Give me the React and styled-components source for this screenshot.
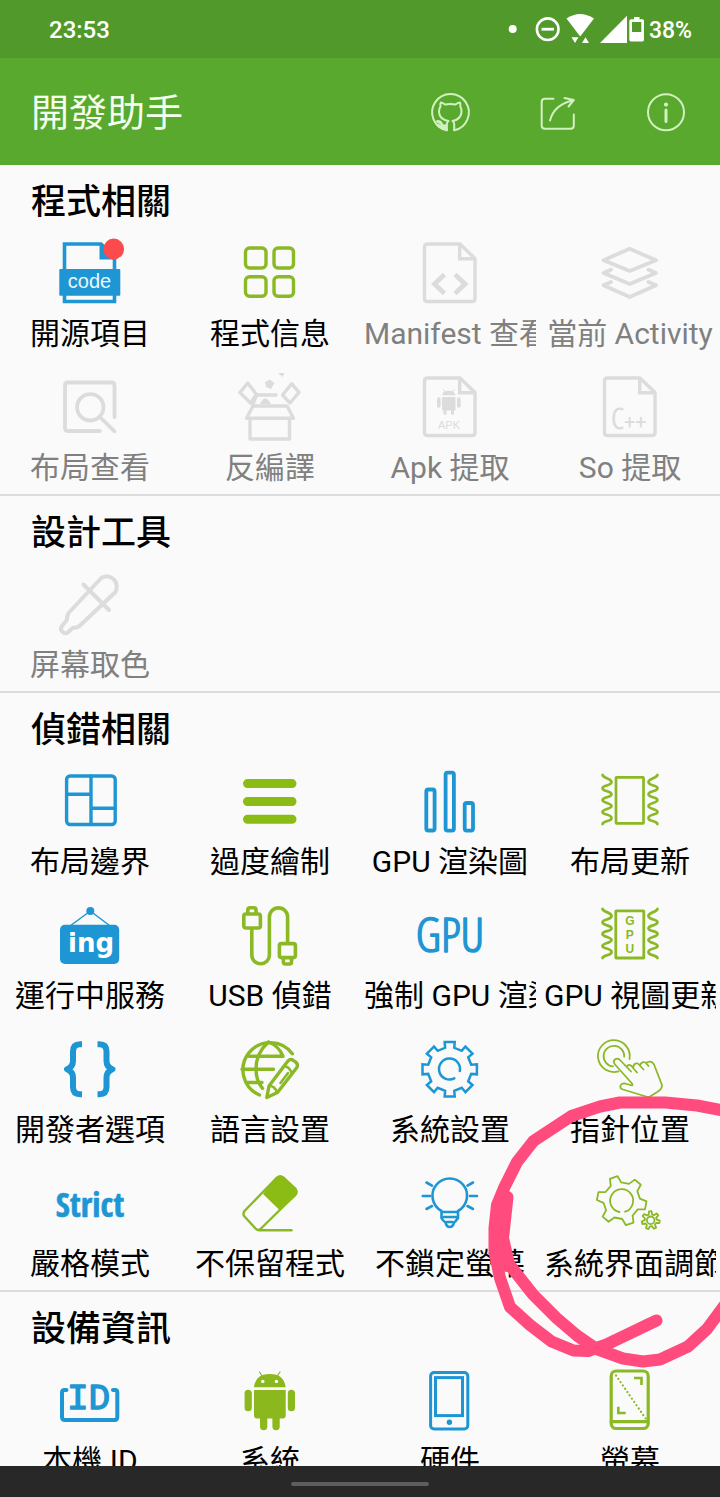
import React from "react";
import styled, { createGlobalStyle } from "styled-components";

const BLUE = "#1f96d4";
const GREEN = "#8bb926";
const GREY = "#dcdcdc";

const GlobalStyle = createGlobalStyle`
  * { box-sizing: border-box; }
  body {
    margin: 0;
    background: #fafafa;
    font-family: Roboto, "Noto Sans CJK TC", sans-serif;
  }
`;

const Screen = styled.div`
  display: flex;
  flex-direction: column;
  height: 100vh;
  overflow: hidden;
`;

const StatusBar = styled.div`
  flex: none;
  display: flex;
  align-items: center;
  justify-content: space-between;
  height: 58px;
  padding: 2px 28px 0 49px;
  background: #52992b;
  color: #fff;
  font-size: 24px;
  font-weight: 500;
`;

const StatusIcons = styled.div`
  display: flex;
  align-items: center;
  gap: 5px;
  font-size: 23px;
`;

const AppBar = styled.header`
  flex: none;
  display: flex;
  align-items: center;
  justify-content: space-between;
  height: 107px;
  padding: 0 34px 0 31px;
  background: #59a92f;
`;

const Title = styled.h1`
  margin: 0;
  padding-top: 2px;
  color: #f4ffec;
  font-size: 38px;
  font-weight: 400;
  line-height: 44px;
`;

const Actions = styled.nav`
  display: flex;
  gap: 68px;
`;

const ActionButton = styled.button`
  display: block;
  width: 40px;
  height: 40px;
  padding: 0;
  border: 0;
  background: none;
  color: #d3f0c0;
  cursor: pointer;
`;

const Content = styled.main`
  flex: 1;
  min-height: 0;
  overflow: hidden auto;
  position: relative;
  scrollbar-width: none;
`;

const Section = styled.section`
  border-bottom: 2px solid #dcdcdc;
`;

const SectionTitle = styled.h2`
  margin: 0;
  padding: 16px 31px 1px;
  color: #000;
  font-size: 35px;
  font-weight: 500;
  line-height: 44px;
`;

const Grid = styled.div`
  display: grid;
  grid-template-columns: repeat(4, minmax(0, 1fr));
`;

const Tile = styled.button`
  display: flex;
  flex-direction: column;
  align-items: center;
  gap: 12px;
  height: 134px;
  padding: 14px 4px 0;
  border: 0;
  background: none;
  color: #000;
  font: inherit;
  cursor: pointer;

  &:disabled {
    color: #808080;
    cursor: default;
  }
`;

const Label = styled.span`
  width: 100%;
  overflow: hidden;
  font-size: 30px;
  line-height: 36px;
  text-align: center;
  white-space: nowrap;
`;

const Glyph = styled.svg`
  display: block;
  flex: none;
  overflow: visible;
`;

const Scribble = styled.svg`
  position: absolute;
  top: 925px;
  right: 0;
  pointer-events: none;
`;

const NavBar = styled.footer`
  flex: none;
  display: flex;
  align-items: center;
  justify-content: center;
  height: 31px;
  padding-top: 4px;
  background: #282828;
`;

const NavHandle = styled.span`
  width: 138px;
  height: 4px;
  border-radius: 2px;
  background: #5e5e5e;
`;

function Icon({ color, width = 3.4, children }) {
  return (
    <Glyph
      width="64"
      height="64"
      viewBox="0 0 64 64"
      fill="none"
      stroke={color}
      strokeWidth={width}
      strokeLinecap="round"
      strokeLinejoin="round"
      aria-hidden="true"
    >
      {children}
    </Glyph>
  );
}

function gearPath(cx, cy, teeth, outer, inner, topHalf, baseHalf, rotation) {
  const points = [];
  for (let i = 0; i < teeth; i += 1) {
    const a = ((rotation + (i * 360) / teeth) * Math.PI) / 180;
    [
      [inner, -baseHalf],
      [outer, -topHalf],
      [outer, topHalf],
      [inner, baseHalf],
    ].forEach(([r, t]) => {
      const x = cx + r * Math.cos(a) - t * Math.sin(a);
      const y = cy + r * Math.sin(a) + t * Math.cos(a);
      points.push(`${x.toFixed(1)} ${y.toFixed(1)}`);
    });
  }
  return `M${points.join("L")}Z`;
}

const CodeIcon = () => (
  <Icon color={BLUE} width={3.6}>
    <path strokeLinejoin="miter" d="M6.5 30V4H43L56.5 17V30M6.5 56V61.5H56.5V56" />
    <path fill={BLUE} stroke="none" d="M41.5 3V19.5H58V17L44 3Z" />
    <rect x="1.3" y="29" width="61" height="26.7" rx="1" fill={BLUE} stroke="none" />
    <text x="31.5" y="48" fill="#e8f8ff" stroke="none" textAnchor="middle" fontFamily="Liberation Sans, sans-serif" fontSize="20">
      code
    </text>
    <circle cx="55.7" cy="9" r="10.4" fill="#fd4a4c" stroke="none" />
  </Icon>
);

const AppsIcon = () => (
  <Icon color={GREEN} width={3.4}>
    <rect x="7.5" y="8" width="20.5" height="20" rx="4" />
    <rect x="36" y="8" width="19.5" height="20" rx="4" />
    <rect x="7.5" y="36.7" width="20.5" height="19.5" rx="4" />
    <rect x="36" y="36.7" width="19.5" height="19.5" rx="4" />
  </Icon>
);

const Sheet = () => (
  <>
    <path d="M9.5 4H42L57 18.5V58.5Q57 61.5 54 61.5H9.5Q6.5 61.5 6.5 58.5V7Q6.5 4 9.5 4Z" />
    <path strokeLinejoin="miter" d="M41.7 5V18.7H56" />
  </>
);

const ManifestIcon = () => (
  <Icon color={GREY}>
    <Sheet />
    <path strokeWidth="4.8" strokeLinecap="butt" strokeLinejoin="miter" d="M26.5 34.5L16.5 44L26.5 53.5M37 34.5L47 44L37 53.5" />
  </Icon>
);

const LayersIcon = () => (
  <Icon color={GREY} width={3.8}>
    <path d="M31.7 8.7L58 20.3L31.7 31L5.5 20.3Z" />
    <path d="M13 29.8L5.5 33L31.7 44L58 33L50.5 29.8" />
    <path d="M13 42L5.5 45.3L31.7 57L58 45.3L50.5 42" />
  </Icon>
);

const LayoutSearchIcon = () => (
  <Icon color={GREY} width={3.8}>
    <path d="M42 57H10Q7 57 7 54V11.5Q7 8.5 10 8.5H53.5Q56.5 8.5 56.5 11.5V43" />
    <circle cx="32.3" cy="33.3" r="13.2" />
    <path d="M42.5 43.5L56.5 57.3" />
  </Icon>
);

const UnboxIcon = () => (
  <Icon color={GREY} width={3.4}>
    <path d="M12 45V65H51.5V45" />
    <path d="M15 32H49L55.5 44.3H8.5Z" />
    <path d="M38 21H18.5L14.5 31" />
    <path d="M9.7 9L18.5 20.5L12.5 29L2 18.5Z" />
    <path d="M53.7 9.7L61 18.3L52 29L44.5 21Z" />
    <path fill={GREY} stroke="none" d="M22 30Q27 19 33 30Z" />
    <path fill={GREY} stroke="none" d="M27 8L32 5.5L36.5 9L33 15L28 13Z" />
    <path fill={GREY} stroke="none" d="M40 -1H46.5L44.5 3Z" />
  </Icon>
);

const ApkIcon = () => (
  <Icon color={GREY}>
    <Sheet />
    <g fill={GREY} stroke="none">
      <path d="M24 21.2Q25 16.8 30.7 16.8Q36.5 16.8 37.5 21.2Z" />
      <rect x="24" y="23" width="13.5" height="13.5" rx="1" />
      <rect x="19" y="23.3" width="3.6" height="10.5" rx="1.8" />
      <rect x="39" y="23.3" width="3.6" height="10.5" rx="1.8" />
      <rect x="25.5" y="34" width="3" height="6.8" rx="1.4" />
      <rect x="33" y="34" width="3" height="6.8" rx="1.4" />
      <text x="31" y="54.5" textAnchor="middle" fontFamily="Liberation Sans, sans-serif" fontSize="11">
        APK
      </text>
    </g>
    <path strokeWidth="1" d="M25.5 15.5L27.5 18M36 15.5L34 18" />
  </Icon>
);

const CppIcon = () => (
  <Icon color={GREY}>
    <Sheet />
    <text x="31" y="54.5" fill={GREY} strokeWidth="1" textAnchor="middle" fontFamily="Open Sans Condensed Light, Open Sans Condensed, Roboto, sans-serif" fontWeight="300" fontSize="30">
      C
      <tspan stroke="none" fontFamily="Roboto, sans-serif" fontWeight="400" fontSize="20">
        ++
      </tspan>
    </text>
  </Icon>
);

const DropperIcon = () => (
  <Icon color={GREY} width={4}>
    <path d="M43.3 7L11 41.5Q8.8 44 8.8 49L4 55A4.4 4.4 0 0 0 10 61.3L15 56.7Q20 57 22.5 54L57 21.5A10.2 10.2 0 0 0 43.3 7Z" />
    <path d="M25.5 13.5L51 39" />
  </Icon>
);

const BoundsIcon = () => (
  <Icon color={BLUE}>
    <rect x="8.6" y="8" width="48.6" height="48.5" rx="3.5" />
    <path d="M33 8V56.5M8.6 26.3H33M33 40.3H57" />
  </Icon>
);

const OverdrawIcon = () => (
  <Icon color="#8bbb15" width={9}>
    <path d="M9.5 15.6H54M9.5 33.5H54M9.5 51.3H54" />
  </Icon>
);

const BarsIcon = () => (
  <Icon color={BLUE} width={3.8}>
    <rect x="8.3" y="21.5" width="8.3" height="41" rx="2" />
    <rect x="27.6" y="4.6" width="8.3" height="58" rx="2" />
    <rect x="46.7" y="35" width="8.3" height="27.6" rx="2" />
  </Icon>
);

const WAVE = "C6 11 13.5 10 13.5 14S4.5 17 4.5 20.3S13.5 23 13.5 26.2S4.5 29 4.5 32S13.5 35 13.5 38S4.5 41 4.5 44S13.5 46 13.5 50S6 52 4.5 56";

const Waves = () => (
  <>
    <path d={`M4.5 7${WAVE}`} />
    <path transform="translate(64 0) scale(-1 1)" d={`M4.5 7${WAVE}`} />
  </>
);

const RefreshIcon = () => (
  <Icon color={GREEN} width={2.7}>
    <rect x="18" y="9.3" width="27.5" height="46" rx="0.5" />
    <Waves />
  </Icon>
);

const RunningIcon = () => (
  <Icon color={BLUE} width={1.5}>
    <path d="M12.7 23.5L32.3 9L51.5 23.5" />
    <circle cx="32.3" cy="9" r="4" fill={BLUE} stroke="none" />
    <rect x="2" y="22.7" width="59.2" height="39.3" rx="5" fill={BLUE} stroke="none" />
    <text x="33" y="49.5" fill="#fff" stroke="none" textAnchor="middle" fontFamily="DejaVu Sans, sans-serif" fontWeight="700" fontSize="26">
      ing
    </text>
  </Icon>
);

const UsbIcon = () => (
  <Icon color={GREEN} width={3.6}>
    <rect x="5.8" y="12" width="16.6" height="14" rx="2" />
    <path d="M9.8 11.5V8Q9.8 5.8 12 5.8H16Q18 5.8 18 8V11.5" />
    <path d="M13.8 27V53A8.8 8.8 0 0 0 31.4 53V15A9.1 9.1 0 0 1 49.6 15V41" />
    <rect x="41.4" y="41.6" width="16" height="14" rx="2" />
    <path d="M45.4 56V60Q45.4 62 47.4 62H51.5Q53.5 62 53.5 60V56" />
  </Icon>
);

const GpuIcon = () => (
  <Icon color={BLUE}>
    <text x="32" y="50" fill={BLUE} strokeWidth="1.6" textAnchor="middle" fontFamily="Open Sans Condensed Light, Open Sans Condensed, Roboto, sans-serif" fontWeight="300" fontSize="48">
      GPU
    </text>
  </Icon>
);

const GpuRefreshIcon = () => (
  <Icon color={GREEN} width={2.8}>
    <rect x="17.8" y="8.8" width="28" height="47.2" rx="0.5" />
    <Waves />
    <g fill={GREEN} stroke="none" textAnchor="middle" fontFamily="Liberation Sans, sans-serif" fontWeight="700" fontSize="12">
      <text x="31.8" y="23">G</text>
      <text x="31.8" y="36.5">P</text>
      <text x="31.8" y="50.5">U</text>
    </g>
  </Icon>
);

const BracesIcon = () => (
  <Icon color={BLUE} width={6}>
    <path
      strokeLinecap="butt"
      d="M24 8.2H22Q15 8.2 15 15.5V25Q15 31 9 33.2Q15 35.5 15 41.5V51Q15 58.2 22 58.2H24M39.5 8.2H41.5Q48.5 8.2 48.5 15.5V25Q48.5 31 54.5 33.2Q48.5 35.5 48.5 41.5V51Q48.5 58.2 41.5 58.2H39.5"
    />
  </Icon>
);

const LanguageIcon = () => (
  <Icon color={GREEN} width={3.4}>
    <path d="M54.3 17.8A27.3 27.3 0 1 0 21.5 59" />
    <path d="M30.5 6Q41 10 45 20.3H11M30.5 6Q18 17 18 33Q18 45 24.5 52.3M4 33.2H35.5M9 46.5H24" />
    <path d="M28.8 61.5L31 50L49.5 25.5Q52 22 55.5 24.5L57.5 26Q61 28.5 58.5 32L39.5 56.5Z" />
    <path strokeWidth="2.6" d="M46 30Q51 30.5 53.5 36.5M31.5 50Q37 50 39 56.5M50 37L42.5 47" />
  </Icon>
);

const GearIcon = () => (
  <Icon color={BLUE} width={2.5}>
    <path strokeLinejoin="miter" d={gearPath(31.7, 33.3, 8, 27.2, 21.5, 5, 4.6, 0)} />
    <path d="M36.3 42.3A10.5 10.5 0 1 1 41.8 35" />
  </Icon>
);

const PointerIcon = () => (
  <Icon color={GREEN} width={1.8}>
    <path d="M20.5 35.3A15.9 15.9 0 1 1 31.5 23" />
    <path d="M15 30.4A10.3 10.3 0 1 1 26.2 20.5" />
    <path d="M17 28.5Q14.5 25 17.2 23.2Q20 21.5 22.5 24.5L33 35.5M28.8 31Q30 28 33 29.5L39 36.5M35 31.5Q36 26.5 40 27.5L45.5 33.5M42 29Q44 25 47.5 26.5L50.5 30M48 27Q53 23.5 56 28.5L64 49Q64 53 60 55.5L52 60.5Q50 61.5 48 60.5L25 53.5Q21.5 52.5 22.5 49.5Q23.5 47 27 47.5L34 49.5Q35 49 34 47.5L17 28.5" />
  </Icon>
);

const StrictIcon = () => (
  <Icon color={BLUE}>
    <text x="32" y="47" fill={BLUE} strokeWidth="0.6" textAnchor="middle" fontFamily="Open Sans Condensed, Roboto, sans-serif" fontWeight="700" fontSize="34">
      Strict
    </text>
  </Icon>
);

const EraserIcon = () => (
  <Icon color={GREEN} width={2.4}>
    <path d="M38.5 8L6.5 41Q4.5 44 6.5 46.5L17.5 58.5Q20.3 61.5 23 58.5L56.5 25.5Q60.5 21.5 56.5 18L46 8Q42 5 38.5 8Z" />
    <path fill="#8bbb15" stroke="none" d="M25 24L38 7.5Q42 3.5 46 7L57.5 17.5Q61.5 22 58 26L42 40.5Z" />
    <path d="M21 60.2H53.5" />
  </Icon>
);

const BulbIcon = () => (
  <Icon color={BLUE} width={2.6}>
    <path d="M23.5 41A17.3 17.3 0 1 1 40 41V48Q38 51 36 52.5Q35 57 31.7 57Q28.5 57 27.5 52.5Q25 51 23.5 48ZM24 42H39.5M26 47H38M29 52H34" />
    <path d="M4.8 26H12M52 26H59M8.5 12.5L14 15.6M55 12.5L49.5 15.6M8.5 39L14 36M55 39L49.5 36" />
  </Icon>
);

const TunerIcon = () => (
  <Icon color={GREEN} width={1.8}>
    <path d={gearPath(23.7, 30.7, 6, 24.5, 17.5, 4, 5.5, 11)} />
    <path d="M21.5 42A11.5 11.5 0 1 1 27 41.7" />
    <path d={gearPath(52.7, 50.3, 7, 9, 5.8, 1.3, 1.7, 10)} />
    <circle cx="52.7" cy="50.3" r="3.8" />
  </Icon>
);

const IdIcon = () => (
  <Icon color={BLUE} width={4}>
    <path d="M8.5 23H6.5Q4 23 4 25.5V50Q4 53 7 53H56.5Q59.3 53 59.3 50V25.5Q59.3 23 57 23H55" />
    <text x="30.5" y="42" fill={BLUE} strokeWidth="1.4" textAnchor="middle" fontFamily="Liberation Mono, monospace" fontSize="36">
      ID
    </text>
  </Icon>
);

const AndroidIcon = () => (
  <Icon color="#8bb81c" width={1.2}>
    <g fill="#8bb81c" stroke="none">
      <path d="M16 20.3Q17.5 7 31.8 7T47.7 20.3Z" />
      <path d="M16 23H47.7V48.5Q47.7 51.5 44.7 51.5H19Q16 51.5 16 48.5Z" />
      <rect x="6.6" y="22.8" width="7.2" height="21.5" rx="3.6" />
      <rect x="49.8" y="22.8" width="7.2" height="21.5" rx="3.6" />
      <rect x="22" y="46" width="7.3" height="17.2" rx="3.6" />
      <rect x="34.4" y="46" width="7.3" height="17.2" rx="3.6" />
    </g>
    <circle cx="24.8" cy="14.4" r="1.7" fill="#fff" stroke="none" />
    <circle cx="38.4" cy="14.4" r="1.7" fill="#fff" stroke="none" />
    <path d="M21.5 5L24.5 9.5M42 5L39 9.5" />
  </Icon>
);

const PhoneIcon = () => (
  <Icon color={BLUE} width={3}>
    <rect x="12.6" y="5.5" width="37.2" height="56.5" rx="3.5" />
    <rect x="17.5" y="10.6" width="27" height="38" rx="0" strokeLinejoin="miter" />
    <circle cx="31.4" cy="55.2" r="2.7" fill={BLUE} stroke="none" />
  </Icon>
);

const DisplayIcon = () => (
  <Icon color={GREEN} width={3.2}>
    <rect x="13.2" y="4" width="37" height="57.5" rx="5" />
    <path d="M13.2 54.7H50" />
    <path strokeLinecap="butt" strokeLinejoin="miter" strokeWidth="2.6" d="M36 11H43.5V18M20.3 39.7V46H27.7" />
    <path strokeWidth="2.2" strokeDasharray="0.1 3.9" d="M18 8.5L48 52" />
  </Icon>
);

const SECTIONS = [
  {
    title: "程式相關",
    items: [
      { label: "開源項目", icon: CodeIcon },
      { label: "程式信息", icon: AppsIcon },
      { label: "Manifest 查看", icon: ManifestIcon, disabled: true },
      { label: "當前 Activity", icon: LayersIcon, disabled: true },
      { label: "布局查看", icon: LayoutSearchIcon, disabled: true },
      { label: "反編譯", icon: UnboxIcon, disabled: true },
      { label: "Apk 提取", icon: ApkIcon, disabled: true },
      { label: "So 提取", icon: CppIcon, disabled: true },
    ],
  },
  {
    title: "設計工具",
    items: [{ label: "屏幕取色", icon: DropperIcon, disabled: true }],
  },
  {
    title: "偵錯相關",
    items: [
      { label: "布局邊界", icon: BoundsIcon },
      { label: "過度繪制", icon: OverdrawIcon },
      { label: "GPU 渲染圖", icon: BarsIcon },
      { label: "布局更新", icon: RefreshIcon },
      { label: "運行中服務", icon: RunningIcon },
      { label: "USB 偵錯", icon: UsbIcon },
      { label: "強制 GPU 渲染", icon: GpuIcon },
      { label: "GPU 視圖更新", icon: GpuRefreshIcon },
      { label: "開發者選項", icon: BracesIcon },
      { label: "語言設置", icon: LanguageIcon },
      { label: "系統設置", icon: GearIcon },
      { label: "指針位置", icon: PointerIcon },
      { label: "嚴格模式", icon: StrictIcon },
      { label: "不保留程式", icon: EraserIcon },
      { label: "不鎖定螢幕", icon: BulbIcon },
      { label: "系統界面調節", icon: TunerIcon },
    ],
  },
  {
    title: "設備資訊",
    items: [
      { label: "本機 ID", icon: IdIcon },
      { label: "系統", icon: AndroidIcon },
      { label: "硬件", icon: PhoneIcon },
      { label: "螢幕", icon: DisplayIcon },
    ],
  },
];

function ActionIcon({ children }) {
  return (
    <Glyph width="40" height="40" viewBox="0 0 40 40" fill="none" stroke="currentColor" strokeWidth="2" strokeLinecap="round" strokeLinejoin="round" aria-hidden="true">
      {children}
    </Glyph>
  );
}

export default function App() {
  return (
    <Screen>
      <GlobalStyle />
      <StatusBar>
        <span>23:53</span>
        <StatusIcons>
          <Glyph width="136" height="32" viewBox="508 14 136 32" fill="#fff" aria-hidden="true">
            <circle cx="512.7" cy="29" r="4" />
            <circle cx="547.7" cy="29.2" r="10.8" fill="none" stroke="#fff" strokeWidth="2.6" />
            <path d="M541.5 27.8H554V30.6H541.5Z" />
            <path d="M566.5 18.5Q580 9.5 594 18.5L580.2 36.5Z" />
            <path d="M571.5 37.3H578.5L575 43ZM582 43L585.5 37.3L589 43Z" />
            <path d="M600 43L627 15.7V43Z" />
            <path fillRule="evenodd" d="M634 17H639.5V19.3H642.5Q644 19.3 644 21V39.7Q644 41.5 642.5 41.5H631Q629.3 41.5 629.3 39.7V21Q629.3 19.3 631 19.3H634ZM632 22V32H641.3V22Z" />
          </Glyph>
          38%
        </StatusIcons>
      </StatusBar>
      <AppBar>
        <Title>開發助手</Title>
        <Actions>
          <ActionButton type="button" aria-label="GitHub">
            <ActionIcon>
              <path d="M16.8 38.3A18.3 18.3 0 1 1 24.2 38.3" />
              <path d="M16.8 38.3V32Q17 30 18.5 29Q9.5 27.5 9 20Q8.8 16.5 10.5 14.5Q10 12 10.8 10.6Q13 11 15 12.5Q20.3 11.5 25.5 12.5Q27.5 11 30 10.6Q30.8 12.5 30.3 14.5Q32 17 31.5 20.5Q30.5 27.5 22.5 29Q24.2 30 24.2 32V38.3" />
              <path strokeWidth="2.8" d="M7.5 29.5Q10.5 29.5 11.5 32T16.5 33.5M8 33Q11 36.5 16.5 36.5" />
            </ActionIcon>
          </ActionButton>
          <ActionButton type="button" aria-label="分享">
            <ActionIcon>
              <path d="M15.5 6.7H7Q3.7 6.7 3.7 10V33.5Q3.7 36.8 7 36.8H32.5Q35.8 36.8 35.8 33.5V22.5" />
              <path d="M12 28.5Q16 12.5 35.5 8.2M26.5 6L35.8 8L30.5 14.5" />
            </ActionIcon>
          </ActionButton>
          <ActionButton type="button" aria-label="關於">
            <ActionIcon>
              <circle cx="20" cy="20.3" r="18" />
              <circle cx="20" cy="12.6" r="2.1" fill="currentColor" stroke="none" />
              <path strokeWidth="3" d="M20 18V29.5" />
            </ActionIcon>
          </ActionButton>
        </Actions>
      </AppBar>
      <Content>
        {SECTIONS.map((section) => (
          <Section key={section.title}>
            <SectionTitle>{section.title}</SectionTitle>
            <Grid>
              {section.items.map(({ label, icon: ItemIcon, disabled }) => (
                <Tile key={label} type="button" disabled={disabled}>
                  <ItemIcon />
                  <Label>{label}</Label>
                </Tile>
              ))}
            </Grid>
          </Section>
        ))}
        <Scribble width="240" height="280" viewBox="480 1090 240 280" fill="none" stroke="#ff4b7e" strokeWidth="12" strokeLinecap="round" strokeLinejoin="round" aria-hidden="true">
          <path d="M726 1111L697 1105.5L665 1102.5H620L600 1106.5L571.5 1116L533.5 1141L517 1162L504 1188L497 1205L494.5 1228V1252L500 1278L510 1307L530 1325L551.5 1341.5L573.5 1350.5L588 1351L606.5 1344.5L656.5 1320.5" />
          <path d="M507.5 1197L503 1238L509 1264L533 1294.5L556.5 1318L577 1335.5L596.5 1349L623 1358.5L643 1361.5L660 1359.5L688 1346.5L707 1329L724 1306" />
          <path fill="#ff4b7e" d="M500 1202L506 1199L502 1238L507 1266L499 1250Z" />
        </Scribble>
      </Content>
      <NavBar>
        <NavHandle />
      </NavBar>
    </Screen>
  );
}
